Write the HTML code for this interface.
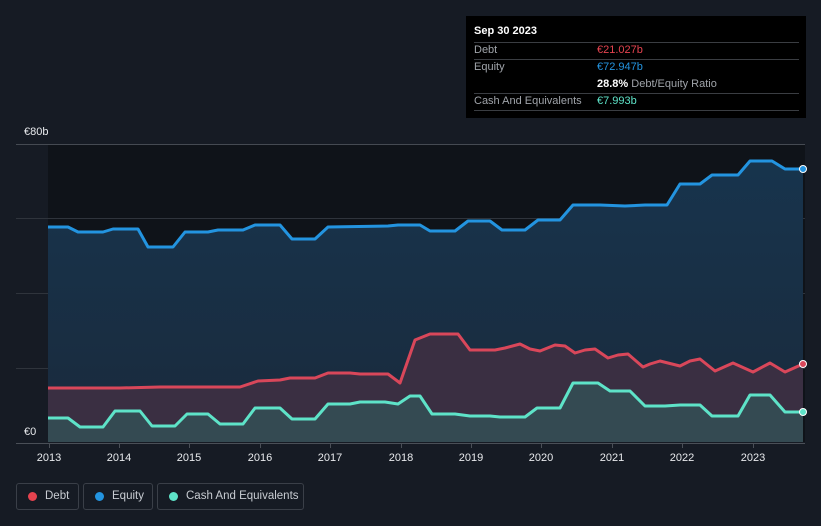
<!DOCTYPE html>
<html><head><style>
html,body{margin:0;width:821px;height:526px;overflow:hidden}
body{background:#161b24;font-family:"Liberation Sans",sans-serif;position:relative}
.tip{position:absolute;left:466px;top:16px;width:340px;height:102px;background:#000;color:#fff;font-size:11px;white-space:nowrap}
.tip .r{position:absolute;left:8px;width:325px;border-top:1px solid #3a3d42}
.lg{position:absolute;top:483px;height:27px;border:1px solid #3a3f48;border-radius:3px;color:#c8ccd2;font-size:11.5px;line-height:25px;box-sizing:border-box;white-space:nowrap}
.lg i{position:absolute;left:11px;top:8px;width:9px;height:9px;border-radius:50%}
</style></head><body>
<svg width="821" height="526" style="position:absolute;left:0;top:0">
<defs>
<linearGradient id="eg" x1="0" y1="0" x2="0" y2="1"><stop offset="0" stop-color="#17344d"/><stop offset="1" stop-color="#1a2a3c"/></linearGradient>
</defs>
<rect x="48" y="144" width="757" height="298" fill="#0f1319"/>
<g stroke="#2f343c" stroke-width="1">
<line x1="16" y1="144.5" x2="805" y2="144.5" stroke="#454a52"/>
<line x1="16" y1="218.5" x2="805" y2="218.5"/>
<line x1="16" y1="293.5" x2="805" y2="293.5"/>
<line x1="16" y1="368.5" x2="805" y2="368.5"/>
</g>
<path d="M48 227 L68 227 78 232 103 232 113 229 138 229 148 247 173 247 185 232 208 232 218 230 243 230 255 225 280 225 292 239 315 239 328 227 388 226 398 225 420 225 430 231 455 231 468 221 490 221 502 230 525 230 538 220 560 220 573 205 600 205 625 206 645 205 667 205 680 184 700 184 712 175 738 175 750 161 772 161 785 169 803 169 L803 442 48 442Z" fill="url(#eg)"/>
<path d="M48 388 L120 388 160 387 240 387 258 381 280 380 290 378 315 378 328 373 350 373 360 374 388 374 400 383 415 340 430 334 458 334 470 350 495 350 505 348 520 344 530 349 540 351 555 345 565 346 575 353 585 350 595 349 608 358 618 355 628 354 643 367 650 364 660 361 680 366 690 361 700 359 715 371 733 363 753 372 770 363 785 372 803 364 L803 442 48 442Z" fill="#3a2f42"/>
<path d="M48 418 L68 418 80 427 103 427 115 411 140 411 152 426 175 426 187 414 208 414 220 424 243 424 255 408 280 408 292 419 315 419 328 404 350 404 360 402 385 402 398 404 410 396 420 396 432 414 455 414 470 416 490 416 500 417 525 417 537 408 560 408 573 383 598 383 610 391 630 391 645 406 665 406 680 405 700 405 712 416 738 416 750 395 770 395 785 412 803 412 L803 442 48 442Z" fill="#344a52"/>
<g fill="none" stroke-width="3" stroke-linejoin="round">
<path d="M48 227 L68 227 78 232 103 232 113 229 138 229 148 247 173 247 185 232 208 232 218 230 243 230 255 225 280 225 292 239 315 239 328 227 388 226 398 225 420 225 430 231 455 231 468 221 490 221 502 230 525 230 538 220 560 220 573 205 600 205 625 206 645 205 667 205 680 184 700 184 712 175 738 175 750 161 772 161 785 169 803 169" stroke="#2394e0"/>
<path d="M48 388 L120 388 160 387 240 387 258 381 280 380 290 378 315 378 328 373 350 373 360 374 388 374 400 383 415 340 430 334 458 334 470 350 495 350 505 348 520 344 530 349 540 351 555 345 565 346 575 353 585 350 595 349 608 358 618 355 628 354 643 367 650 364 660 361 680 366 690 361 700 359 715 371 733 363 753 372 770 363 785 372 803 364" stroke="#d9475a"/>
<path d="M48 418 L68 418 80 427 103 427 115 411 140 411 152 426 175 426 187 414 208 414 220 424 243 424 255 408 280 408 292 419 315 419 328 404 350 404 360 402 385 402 398 404 410 396 420 396 432 414 455 414 470 416 490 416 500 417 525 417 537 408 560 408 573 383 598 383 610 391 630 391 645 406 665 406 680 405 700 405 712 416 738 416 750 395 770 395 785 412 803 412" stroke="#5ee3c8"/>
</g>
<circle cx="803" cy="169" r="3.5" fill="#2394e0" stroke="#fff" stroke-width="1"/>
<circle cx="803" cy="364" r="3.5" fill="#d9475a" stroke="#fff" stroke-width="1"/>
<circle cx="803" cy="412" r="3.5" fill="#5ee3c8" stroke="#fff" stroke-width="1"/>
<line x1="16" y1="443.5" x2="805" y2="443.5" stroke="#4a4f57"/>
<g stroke="#4a4f57"><line x1="49.5" y1="443" x2="49.5" y2="448"/><line x1="119.5" y1="443" x2="119.5" y2="448"/><line x1="189.5" y1="443" x2="189.5" y2="448"/><line x1="260.5" y1="443" x2="260.5" y2="448"/><line x1="330.5" y1="443" x2="330.5" y2="448"/><line x1="401.5" y1="443" x2="401.5" y2="448"/><line x1="471.5" y1="443" x2="471.5" y2="448"/><line x1="541.5" y1="443" x2="541.5" y2="448"/><line x1="612.5" y1="443" x2="612.5" y2="448"/><line x1="682.5" y1="443" x2="682.5" y2="448"/><line x1="753.5" y1="443" x2="753.5" y2="448"/></g>
<g fill="#e8eaed" font-size="11" text-anchor="middle" font-family="Liberation Sans">
<text x="49" y="461">2013</text><text x="119" y="461">2014</text><text x="189" y="461">2015</text><text x="260" y="461">2016</text><text x="330" y="461">2017</text><text x="401" y="461">2018</text><text x="471" y="461">2019</text><text x="541" y="461">2020</text><text x="612" y="461">2021</text><text x="682" y="461">2022</text><text x="753" y="461">2023</text>
<text x="24" y="435" text-anchor="start">€0</text><text x="24" y="135" text-anchor="start">€80b</text>
</g>
</svg>
<div class="tip">
<div style="position:absolute;left:8px;top:9px;font-weight:bold;font-size:11px">Sep 30 2023</div>
<div class="r" style="top:26px"></div>
<div style="position:absolute;left:8px;top:28px;color:#a0a4aa">Debt</div><div style="position:absolute;left:131px;top:28px;color:#e5434f">€21.027b</div>
<div class="r" style="top:43px"></div>
<div style="position:absolute;left:8px;top:45px;color:#a0a4aa">Equity</div><div style="position:absolute;left:131px;top:45px;color:#2394e0">€72.947b</div>
<div style="position:absolute;left:131px;top:62px;color:#a0a4aa"><b style="color:#fff">28.8%</b> Debt/Equity Ratio</div>
<div class="r" style="top:77px"></div>
<div style="position:absolute;left:8px;top:79px;color:#a0a4aa">Cash And Equivalents</div><div style="position:absolute;left:131px;top:79px;color:#5ee3c8">€7.993b</div>
<div class="r" style="top:94px"></div>
</div>
<div class="lg" style="left:16px;width:63px"><i style="background:#e5434f"></i><span style="position:absolute;left:28px">Debt</span></div>
<div class="lg" style="left:83px;width:70px"><i style="background:#2394e0"></i><span style="position:absolute;left:28px">Equity</span></div>
<div class="lg" style="left:157px;width:147px"><i style="background:#5ee3c8"></i><span style="position:absolute;left:28px">Cash And Equivalents</span></div>
</body></html>
